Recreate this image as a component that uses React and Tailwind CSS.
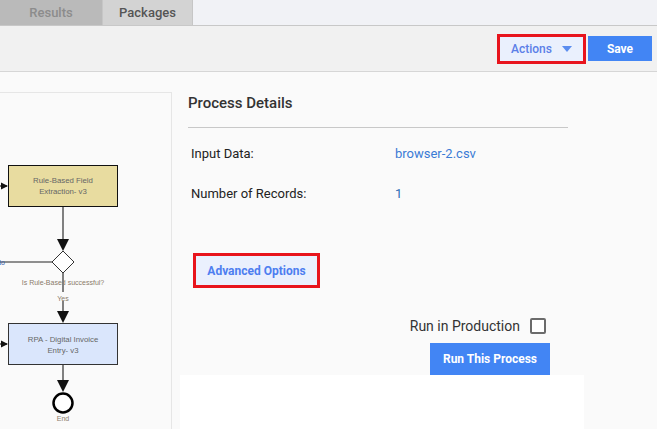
import React from "react";

const font = { fontFamily: "Roboto, 'Liberation Sans', sans-serif" };

// flow diagram drawn in page coordinates, shifted into the panel
const Diagram = () => (
  <svg width="171" height="337" viewBox="0 92 171 337" className="block">
    <defs>
      <marker id="arr" markerWidth="6" markerHeight="6" refX="5" refY="3" orient="auto">
        <path d="M0,0 L6,3 L0,6 z" fill="#111" />
      </marker>
    </defs>
    {/* into first box */}
    <line x1="0" y1="185" x2="7" y2="185" stroke="#222" strokeWidth="1.2" markerEnd="url(#arr)" />
    <rect x="8.5" y="164.5" width="109" height="41" fill="#e8dca0" stroke="#111" strokeWidth="1" />
    <text x="63" y="182" textAnchor="middle" fontSize="7.8" fill="#666" fontFamily="Liberation Sans, sans-serif">Rule-Based Field</text>
    <text x="63" y="193" textAnchor="middle" fontSize="7.8" fill="#666" fontFamily="Liberation Sans, sans-serif">Extraction- v3</text>
    <line x1="63" y1="206" x2="63" y2="248" stroke="#808080" strokeWidth="2" markerEnd="url(#arr)" />
    {/* decision */}
    <polygon points="63,250 74,261 63,272 52,261" fill="#fff" stroke="#333" strokeWidth="1" />
    <line x1="0" y1="261" x2="52" y2="261" stroke="#222" strokeWidth="1" />
    <text x="-4" y="264" fontSize="7" fill="#3b5fb0" fontFamily="Liberation Sans, sans-serif">No</text>
    <text x="63" y="284" textAnchor="middle" fontSize="7" fill="#8a7a6a" fontFamily="Liberation Sans, sans-serif">Is Rule-Based successful?</text>
    <line x1="63" y1="272" x2="63" y2="320" stroke="#808080" strokeWidth="2" markerEnd="url(#arr)" />
    <rect x="59" y="291" width="9" height="9" fill="#fafafa" />
    <text x="63" y="300" textAnchor="middle" fontSize="7" fill="#8a7a6a" fontFamily="Liberation Sans, sans-serif">Yes</text>
    {/* second box */}
    <line x1="0" y1="343" x2="7" y2="343" stroke="#222" strokeWidth="1.2" markerEnd="url(#arr)" />
    <rect x="8.5" y="322.5" width="109" height="41" fill="#dae6fc" stroke="#333" strokeWidth="1" />
    <text x="63" y="341" textAnchor="middle" fontSize="7.8" fill="#666" fontFamily="Liberation Sans, sans-serif">RPA - Digital Invoice</text>
    <text x="63" y="352" textAnchor="middle" fontSize="7.8" fill="#666" fontFamily="Liberation Sans, sans-serif">Entry- v3</text>
    <line x1="63" y1="364" x2="63" y2="389" stroke="#808080" strokeWidth="2" markerEnd="url(#arr)" />
    <circle cx="63" cy="402" r="9.5" fill="#fff" stroke="#000" strokeWidth="2.5" />
    <text x="63" y="420" textAnchor="middle" fontSize="7" fill="#8a7a6a" fontFamily="Liberation Sans, sans-serif">End</text>
  </svg>
);

const App = () => {
  return (
    <div className="w-[657px] h-[429px] overflow-hidden bg-[#fafafa] flex flex-col" style={font}>
      {/* TABS */}
      <div className="h-[26px] flex bg-[#f1f2f6] border-b border-[#c8c8c8] shrink-0">
        <div className="w-[102px] bg-[#bababa] flex items-center justify-center text-[13px] font-medium text-[#8c8c8c]">
          Results
        </div>
        <div className="w-[91px] bg-[#d3d3d3] border-l border-r border-[#c6c6c6] flex items-center justify-center text-[13px] font-medium text-[#555]">
          Packages
        </div>
      </div>

      {/* TOOLBAR */}
      <div className="h-[46px] flex items-center justify-end gap-[2px] pr-[5px] bg-[#f1f1f1] border-b border-[#d6d6d6] shrink-0">
        <button className="w-[89px] h-[30px] border-[3px] border-[#e8141c] bg-[#eaf0fd] flex items-center justify-center gap-[10px] text-[12px] font-medium text-[#5b7fe8]">
          Actions
          <span className="w-0 h-0 border-l-[5px] border-r-[5px] border-t-[6px] border-l-transparent border-r-transparent border-t-[#5b8def]" />
        </button>
        <button className="w-[64px] h-[25px] bg-[#4285f4] text-white text-[12px] font-bold">
          Save
        </button>
      </div>

      {/* CONTENT */}
      <div className="flex flex-1 min-h-0">
        <div className="w-[172px] mt-[20px] border-t border-r border-[#e6e6e6] overflow-hidden shrink-0">
          <Diagram />
        </div>

        <div className="w-[404px] ml-[8px] flex flex-col">
          <div className="pl-[8px] bg-[#fafafa]">
            <h2 className="mt-[21px] text-[15px] leading-[20px] font-medium text-[#333]">Process Details</h2>
            <div className="mt-[14px] w-[380px] border-t border-[#c8c8c8]" />

            <div className="mt-[18px] pl-[3px] flex text-[13px] leading-[16px]">
              <div className="w-[204px] text-[#222]">Input Data:</div>
              <div className="text-[#3a7bd5]">browser-2.csv</div>
            </div>
            <div className="mt-[24px] pl-[3px] flex text-[13px] leading-[16px]">
              <div className="w-[204px] text-[#222]">Number of Records:</div>
              <div className="text-[#2f6db5]">1</div>
            </div>

            <button className="mt-[51px] ml-[5px] w-[127px] h-[35px] border-[3px] border-[#e8141c] bg-[#eaf0fd] text-[12px] font-bold text-[#4d7ef0]">
              Advanced Options
            </button>

            <div className="w-[362px] flex flex-col items-end">
              <div className="mt-[29px] flex items-center gap-[10px] pr-[4px]">
                <span className="text-[14px] leading-[18px] text-[#333]">Run in Production</span>
                <span className="w-[16px] h-[16px] border-2 border-[#6b6b6b] rounded-[2px] bg-white" />
              </div>
              <button className="mt-[8px] w-[120px] h-[32px] bg-[#4285f4] text-white text-[12px] font-bold">
                Run This Process
              </button>
            </div>
          </div>
          <div className="flex-1 bg-white" />
        </div>
      </div>
    </div>
  );
};

export default App;
